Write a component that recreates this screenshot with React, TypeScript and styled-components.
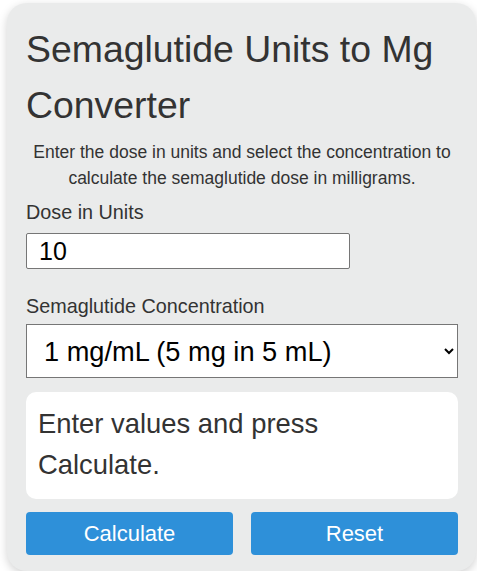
import React, { useCallback, useState } from 'react';
import styled, { createGlobalStyle } from 'styled-components';

const GlobalStyle = createGlobalStyle`
    html, body {
        margin: 0;
        padding: 0;
        background: #ffffff;
    }
    body {
        font-family: "Liberation Sans", Arial, sans-serif;
        color: #333333;
    }
`;

const Page = styled.div`
    padding: 3px 0 0 7px;
`;

const Card = styled.div`
    width: 469px;
    box-sizing: border-box;
    padding: 18px 18px 16px 19px;
    background: #eaebeb;
    border-radius: 20px;
    box-shadow: 0 3px 10px rgba(0, 0, 0, 0.18);
    display: flex;
    flex-direction: column;
`;

const Title = styled.h1`
    margin: 0;
    font-size: 37.4px;
    line-height: 56px;
    font-weight: 400;
    color: #333333;
`;

const Intro = styled.p`
    margin: 6px 0 0;
    font-size: 17.5px;
    line-height: 26.25px;
    text-align: center;
    color: #333333;
`;

const Label = styled.label<{ $gap: number }>`
    display: block;
    margin-top: ${(p) => p.$gap}px;
    font-size: 19.8px;
    line-height: 24px;
    color: #333333;
`;

const DoseInput = styled.input`
    margin: 9px 0 0;
    width: 75%;
    height: 36px;
    box-sizing: border-box;
    padding: 0 11px 0 12px;
    font-family: "Liberation Sans", Arial, sans-serif;
    font-size: 25px;
    color: #000000;
    background: #ffffff;
    border: 1px solid #767676;
    border-radius: 2px;
    outline: none;
`;

const ConcentrationSelect = styled.select`
    margin: 6px 0 0;
    width: 100%;
    height: 54px;
    box-sizing: border-box;
    padding: 0 8px 0 13px;
    font-family: "Liberation Sans", Arial, sans-serif;
    font-size: 27.2px;
    color: #000000;
    background: #ffffff;
    border: 1px solid #767676;
    border-radius: 0;
`;

const ResultBox = styled.div`
    margin-top: 14px;
    padding: 11px 24px 14px 12px;
    background: #ffffff;
    border-radius: 10px;
    font-size: 27.4px;
    line-height: 41px;
    color: #333333;
`;

const ButtonRow = styled.div`
    margin-top: 13px;
    display: grid;
    grid-template-columns: 1fr 1fr;
    gap: 18px;
`;

const ActionButton = styled.button`
    height: 43px;
    border: none;
    border-radius: 4px;
    background: #2e90d9;
    color: #ffffff;
    font-family: "Liberation Sans", Arial, sans-serif;
    font-size: 22px;
    cursor: pointer;
`;

const concentrations = [
    { value: '1', label: '1 mg/mL (5 mg in 5 mL)' },
    { value: '2', label: '2 mg/mL (10 mg in 5 mL)' },
    { value: '2.5', label: '2.5 mg/mL (5 mg in 2 mL)' },
];

const App: React.FC = () => {
    const [units, setUnits] = useState('10');
    const [concentration, setConcentration] = useState('1');
    const [result, setResult] = useState('Enter values and press Calculate.');

    const handleCalculate = useCallback(() => {
        const u = parseFloat(units);
        const c = parseFloat(concentration);
        if (isNaN(u)) {
            setResult('Please enter a valid number of units.');
            return;
        }
        // U-100 syringe: 100 units = 1 mL
        const mg = (u / 100) * c;
        setResult(`${u} units = ${mg.toFixed(3)} mg of semaglutide.`);
    }, [units, concentration]);

    const handleReset = useCallback(() => {
        setUnits('');
        setConcentration('1');
        setResult('Enter values and press Calculate.');
    }, []);

    return (
        <Page>
            <GlobalStyle />
            <Card>
                <Title>Semaglutide Units to Mg Converter</Title>
                <Intro>
                    Enter the dose in units and select the concentration to calculate the semaglutide dose in milligrams.
                </Intro>
                <Label $gap={8.5} htmlFor="units">Dose in Units</Label>
                <DoseInput id="units" type="text" value={units} onChange={(e) => setUnits(e.target.value)} />
                <Label $gap={25} htmlFor="concentration">Semaglutide Concentration</Label>
                <ConcentrationSelect
                    id="concentration"
                    value={concentration}
                    onChange={(e) => setConcentration(e.target.value)}
                >
                    {concentrations.map((c) => (
                        <option key={c.value} value={c.value}>{c.label}</option>
                    ))}
                </ConcentrationSelect>
                <ResultBox>{result}</ResultBox>
                <ButtonRow>
                    <ActionButton onClick={handleCalculate}>Calculate</ActionButton>
                    <ActionButton onClick={handleReset}>Reset</ActionButton>
                </ButtonRow>
            </Card>
        </Page>
    );
};

export default App;
